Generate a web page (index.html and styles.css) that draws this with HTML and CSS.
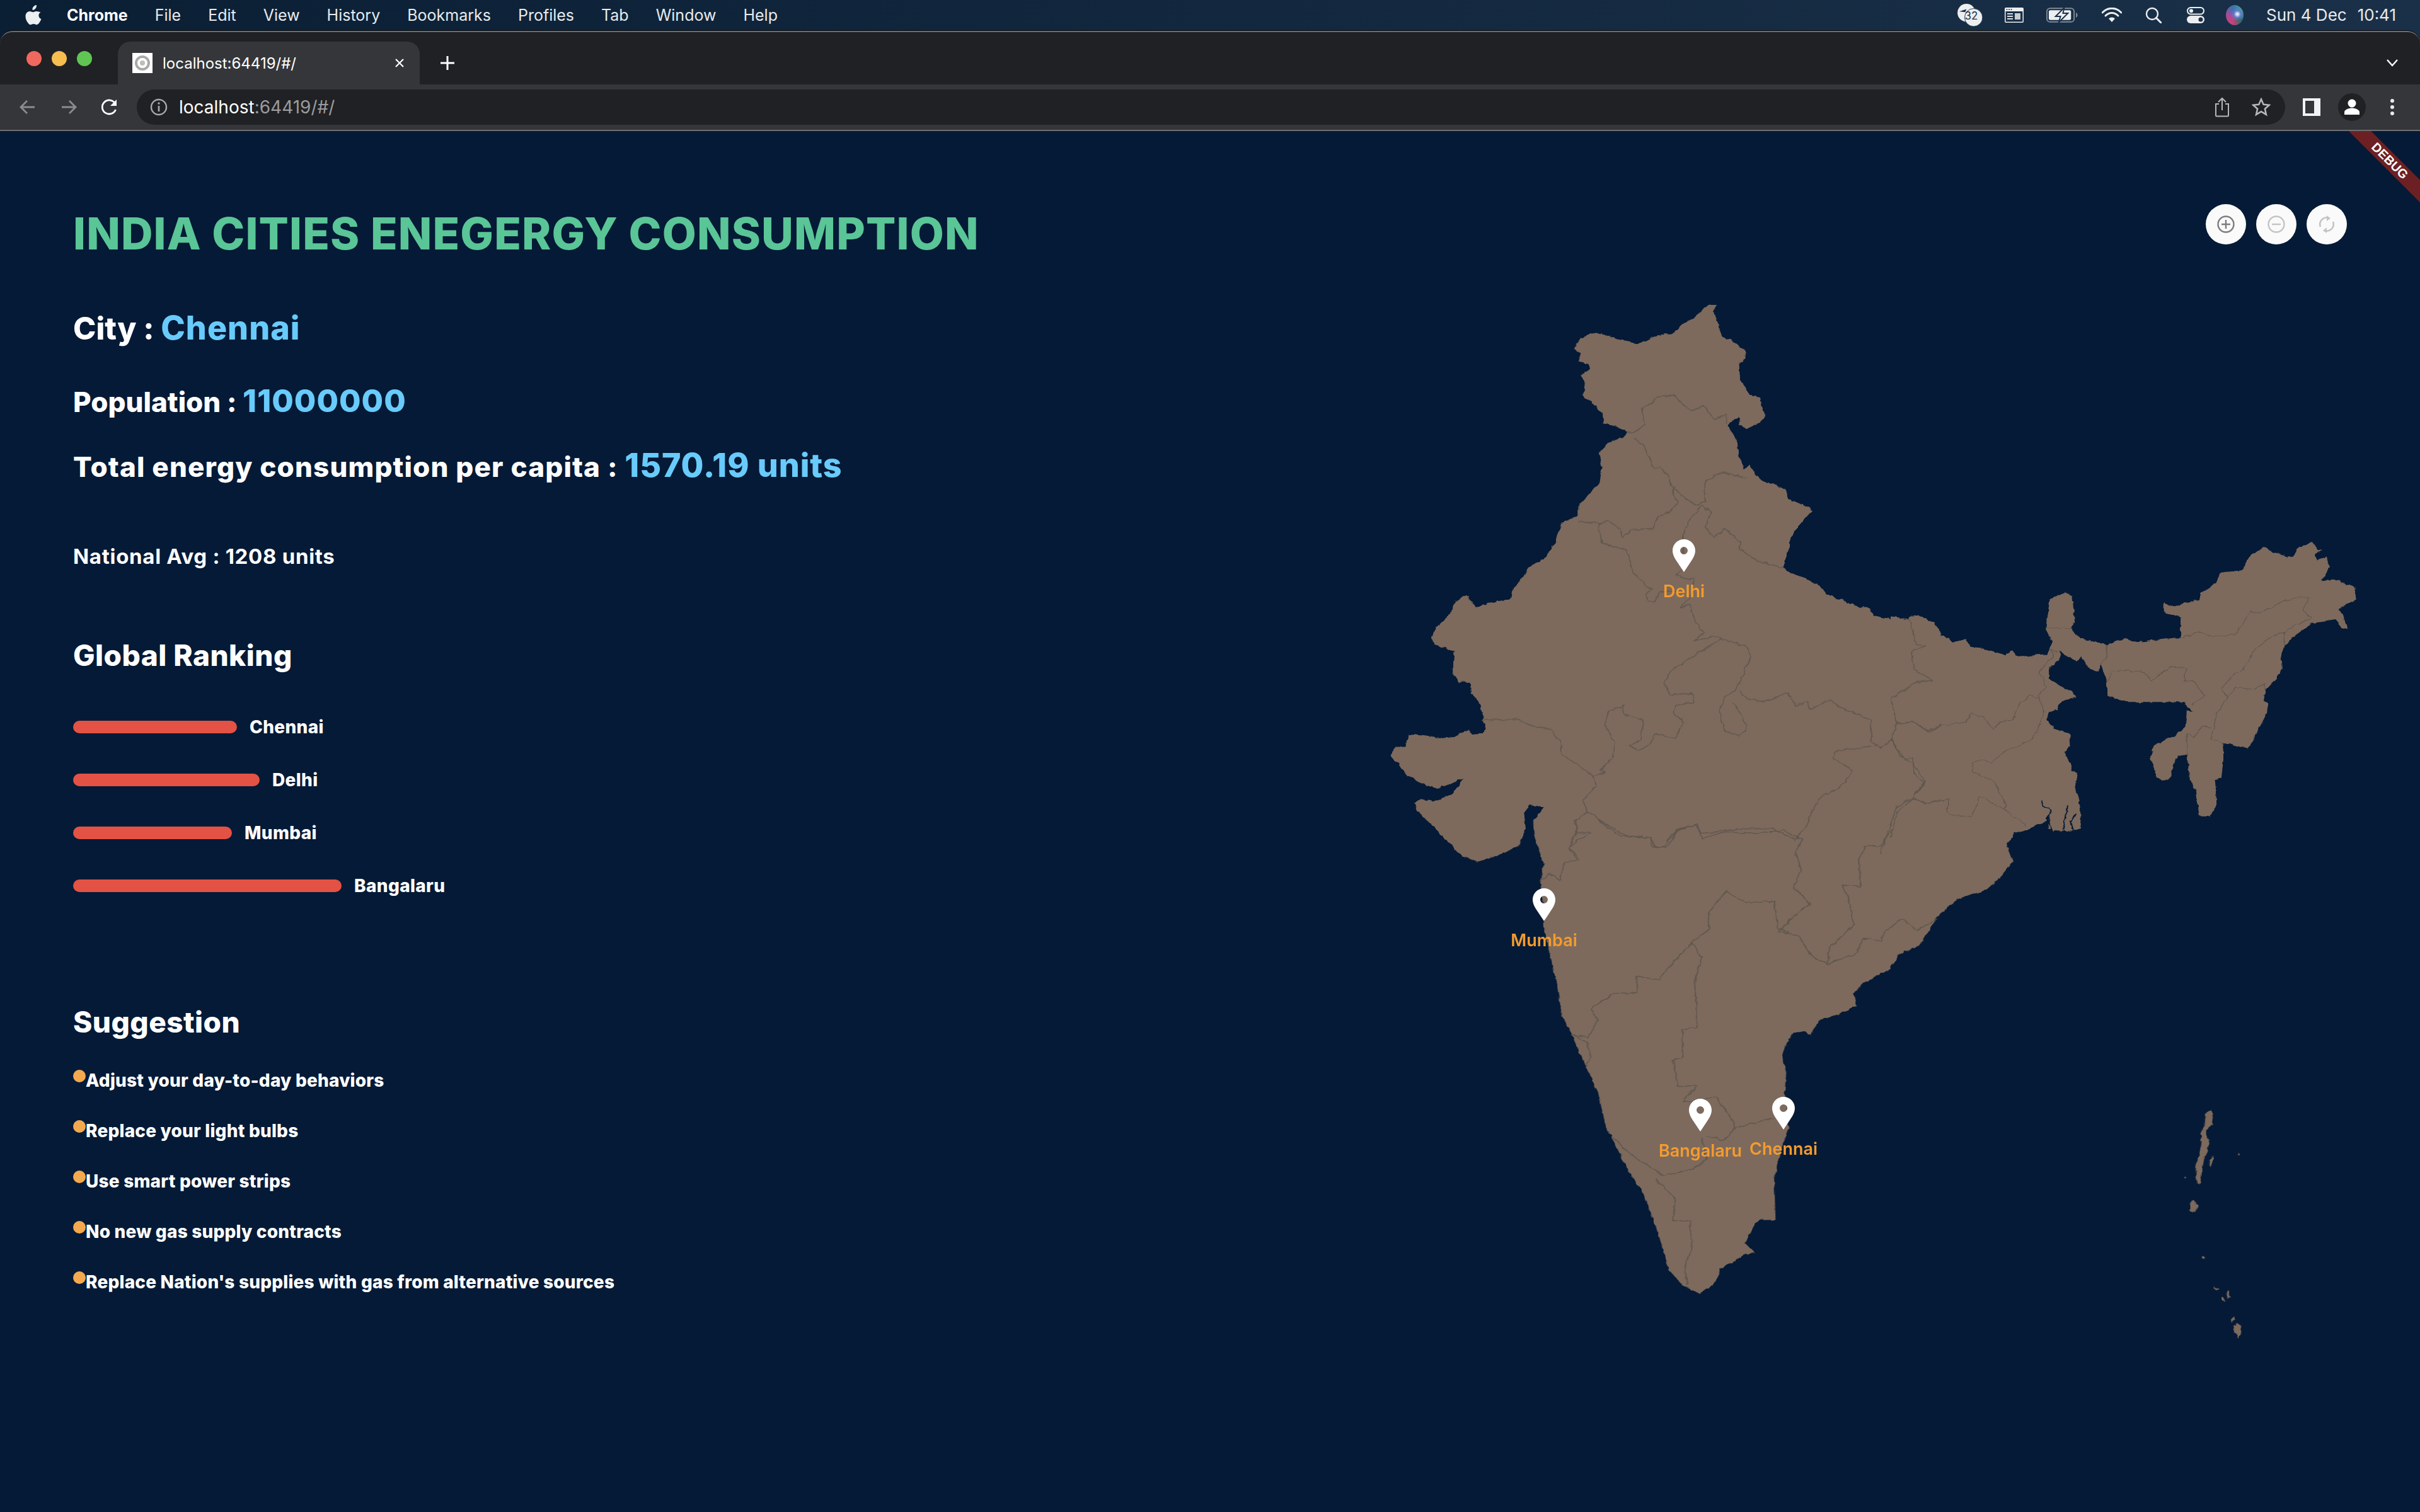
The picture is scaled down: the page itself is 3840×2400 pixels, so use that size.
FILE: index.html
```html
<!DOCTYPE html>
<html lang="en">
<head>
<meta charset="utf-8">
<title>India Cities Energy Consumption</title>
<link rel="stylesheet" href="styles.css">
</head>
<body>
<header class="menubar">
  <svg class="apple" viewBox="0 0 26 32"><path d="M18 0c.3 2.300-.6 4.200-1.700 5.500-1.200 1.400-3 2.500-4.900 2.300-.3-2 .7-4.100 1.700-5.300C14.300 1.100 16.300.100 18 0zM24.700 11.300c-2.100 1.300-3.300 3.100-3.300 5.300 0 2.600 1.500 4.600 4.100 5.700-.6 1.800-1.500 3.500-2.600 5-1.300 1.900-2.700 3.900-4.700 3.900-1.900 0-2.600-1.200-4.900-1.200-2.300 0-3.100 1.200-4.900 1.200-2 0-3.400-2-4.800-4C1.800 24.800.500 21.200.500 18c0-5.200 3.400-8 6.700-8 2 0 3.700 1.300 4.900 1.300 1.200 0 3.100-1.400 5.400-1.400 2.900 0 5.100 1.200 6.200 1.400z"/></svg>
  <nav class="menus">
    <span class="menu-app">Chrome</span><span>File</span><span>Edit</span><span>View</span><span>History</span><span>Bookmarks</span><span>Profiles</span><span>Tab</span><span>Window</span><span>Help</span>
  </nav>
  <div class="status">
    <svg class="st st-sync" viewBox="0 0 42 38"><circle cx="15" cy="15" r="15" fill="#eceef0"/><path d="M3 13l12-4-2 5z" fill="#1a3048"/><circle cx="27" cy="23" r="15" fill="#eceef0" stroke="#1a3048" stroke-width="1"/></svg>
    <span class="sync-count">32</span>
    <svg class="st st-window" viewBox="0 0 30 24"><rect width="30" height="24" rx="2" fill="#eceef0"/><rect x="1.500" y="6" width="27" height="16.500" fill="#1a3048"/><rect x="4" y="9" width="9" height="1.800" fill="#eceef0"/><rect x="4" y="13" width="9" height="1.800" fill="#eceef0"/><rect x="4" y="17" width="9" height="1.800" fill="#eceef0"/><rect x="16" y="9" width="9" height="10" fill="#c9ccd0"/><circle cx="3.500" cy="3" r="1" fill="#1a3048"/><circle cx="7" cy="3" r="1" fill="#1a3048"/><circle cx="10.500" cy="3" r="1" fill="#1a3048"/></svg>
    <svg class="st st-batt" viewBox="0 0 52 24"><rect x="1" y="1" width="44" height="22" rx="5" fill="none" stroke="#7f8a96" stroke-width="2"/><rect x="4" y="4" width="36" height="16" rx="2.500" fill="#eceef0"/><path d="M48 8c2 1 2.500 2 2.500 4s-.5 3-2.500 4z" fill="#7f8a96"/><path d="M29 0L15 14h8l-3 10 15-15h-8z" fill="#eceef0" stroke="#1a3048" stroke-width="2"/></svg>
    <svg class="st st-wifi" viewBox="0 0 32 24"><path d="M1 8c9-9 21-9 30 0" fill="none" stroke="#eceef0" stroke-width="3" stroke-linecap="round"/><path d="M6 13c6-6 14-6 20 0" fill="none" stroke="#eceef0" stroke-width="3" stroke-linecap="round"/><path d="M11 17.500c3-2.700 7-2.700 10 0L16 23z" fill="#eceef0"/></svg>
    <svg class="st st-search" viewBox="0 0 26 26"><circle cx="11" cy="11" r="9" fill="none" stroke="#eceef0" stroke-width="2.400"/><path d="M17.500 17.500L25 25" stroke="#eceef0" stroke-width="3" stroke-linecap="round"/></svg>
    <svg class="st st-ctrl" viewBox="0 0 28 26"><rect x="1" y="1" width="26" height="10.500" rx="5.200" fill="none" stroke="#eceef0" stroke-width="2"/><circle cx="7" cy="6.200" r="3" fill="#eceef0"/><rect x="0" y="14" width="28" height="12" rx="6" fill="#eceef0"/><circle cx="22" cy="20" r="3.500" fill="#1a3048"/></svg>
    <span class="st-siri"></span>
    <span class="clock"><span>Sun 4 Dec</span><span>10:41</span></span>
  </div>
</header>

<div class="window">
  <div class="tabstrip">
    <div class="lights"><i class="light red"></i><i class="light amber"></i><i class="light green"></i></div>
    <div class="tab">
      <span class="favicon"><svg viewBox="0 0 32 32"><circle cx="16" cy="16" r="10" fill="none" stroke="#a9a9a9" stroke-width="4"/><circle cx="16" cy="16" r="4" fill="#bdbdbd"/></svg></span>
      <span class="tab-title">localhost:64419/#/</span>
      <svg class="tab-close" viewBox="0 0 16 16"><path d="M2 2l12 12M14 2L2 14" stroke="#fff" stroke-width="2.200"/></svg>
    </div>
    <svg class="newtab" viewBox="0 0 24 24"><path d="M12 1v22M1 12h22" stroke="#fff" stroke-width="3"/></svg>
    <svg class="tabs-chevron" viewBox="0 0 20 12"><path d="M2 1l8 9 8-9" fill="none" stroke="#fff" stroke-width="2.400"/></svg>
  </div>

  <div class="toolbar">
    <svg class="nav-ic" viewBox="0 0 28 28"><path d="M25 14H4M13 4L3 14l10 10" fill="none" stroke="#8a8c8f" stroke-width="2.800"/></svg>
    <svg class="nav-ic" viewBox="0 0 28 28"><path d="M3 14h21M15 4l10 10-10 10" fill="none" stroke="#8a8c8f" stroke-width="2.800"/></svg>
    <svg class="nav-ic" viewBox="0 0 28 28"><path d="M23.500 18a11 11 0 1 1-1-10" fill="none" stroke="#fff" stroke-width="2.800"/><path d="M25 2v10H15z" fill="#fff"/></svg>
    <div class="omnibox">
      <svg class="info" viewBox="0 0 28 28"><circle cx="14" cy="14" r="12" fill="none" stroke="#a8aaad" stroke-width="2.400"/><path d="M14 12v9" stroke="#a8aaad" stroke-width="2.600"/><circle cx="14" cy="8" r="1.700" fill="#a8aaad"/></svg>
      <span class="url"><b>localhost</b>:64419/#/</span>
      <svg class="omni-ic" viewBox="0 0 24 32"><path d="M7 11H2v18a1.500 1.500 0 0 0 1.500 1.500h17A1.500 1.500 0 0 0 22 29V11h-5" fill="none" stroke="#b6b7b9" stroke-width="2"/><path d="M12 21V3M6 8l6-6 6 6" fill="none" stroke="#b6b7b9" stroke-width="2"/></svg>
      <svg class="omni-ic star" viewBox="0 0 30 30"><path d="M15 2.500l3.700 8.400 9.100.9-6.900 6 2 9-7.900-4.700-7.900 4.700 2-9-6.900-6 9.100-.9z" fill="none" stroke="#b6b7b9" stroke-width="2.600"/></svg>
    </div>
    <svg class="panel" viewBox="0 0 28 28"><rect width="28" height="28" fill="#f1f3f6"/><rect x="4" y="4" width="14" height="20" fill="#35363a"/></svg>
    <span class="avatar"><svg viewBox="0 0 44 44"><circle cx="22" cy="16" r="6.500" fill="#fff"/><path d="M10 34v-4c0-4 7-6.500 12-6.500s12 2.500 12 6.500v4z" fill="#fff"/></svg></span>
    <svg class="kebab" viewBox="0 0 6 26"><circle cx="3" cy="3" r="3" fill="#e8eaed"/><circle cx="3" cy="13" r="3" fill="#e8eaed"/><circle cx="3" cy="23" r="3" fill="#e8eaed"/></svg>
  </div>

  <main class="content">
    <section class="panel-left">
      <h1 class="title">INDIA CITIES ENEGERGY CONSUMPTION</h1>
      <p class="stat stat-city">City : <em>Chennai</em></p>
      <p class="stat stat-pop">Population : <em>11000000</em></p>
      <p class="stat stat-total">Total energy consumption per capita : <em>1570.19 units</em></p>
      <p class="avg">National Avg : 1208 units</p>
      <h2 class="heading heading-rank">Global Ranking</h2>
      <ul class="bars">
        <li class="bar-row"><span class="bar" style="width:260px"></span><span>Chennai</span></li>
        <li class="bar-row"><span class="bar" style="width:296px"></span><span>Delhi</span></li>
        <li class="bar-row"><span class="bar" style="width:252px"></span><span>Mumbai</span></li>
        <li class="bar-row"><span class="bar" style="width:426px"></span><span>Bangalaru</span></li>
      </ul>
      <h2 class="heading heading-sugg">Suggestion</h2>
      <ul class="tips">
        <li>Adjust your day-to-day behaviors</li>
        <li>Replace your light bulbs</li>
        <li>Use smart power strips</li>
        <li>No new gas supply contracts</li>
        <li>Replace Nation's supplies with gas from alternative sources</li>
      </ul>
    </section>

    <section class="map">
      <svg class="map-svg" viewBox="2100 208 1740 2192" preserveAspectRatio="none">
        <defs>
          <filter id="rough" x="2100" y="208" width="1740" height="2192" filterUnits="userSpaceOnUse" primitiveUnits="userSpaceOnUse">
            <feTurbulence type="fractalNoise" baseFrequency="0.11" numOctaves="2" seed="4"/>
            <feDisplacementMap in="SourceGraphic" scale="6" xChannelSelector="R" yChannelSelector="G"/>
          </filter>
        </defs>
        <g filter="url(#rough)">
        <g class="land" transform="translate(2180 460) scale(.574)">
          <path d="M553 163L570 135L607 118L640 125L680 140L735 150L765 133L805 120L825 122L850 97L880 80L925 42L948 42L940 58L950 90L962 130L990 140L1010 155L1030 172L1024 190L1008 205L1010 240L1025 270L1040 292L1068 298L1072 320L1083 350L1065 368L1030 385L1012 372L1010 352L985 365L978 378L992 395L1005 425L1008 460L1018 475L1022 497L1040 485L1055 510L1075 530L1105 535L1140 555L1145 580L1190 595L1215 611L1195 625L1168 660L1150 690L1150 710L1140 735L1130 768L1150 782L1195 798L1235 820L1250 840L1300 860L1345 878L1370 880L1380 900L1430 912L1480 910L1505 900L1540 915L1568 950L1568 1568L465 1568L445 1510L448 1490L462 1488L440 1470L472 1430L430 1425L415 1445L420 1490L400 1515L340 1568L245 1568L180 1500L120 1440L112 1420L130 1408L165 1415L215 1395L250 1350L215 1365L175 1380L130 1365L85 1335L70 1310L45 1290L60 1262L90 1262L95 1230L130 1232L180 1240L215 1238L260 1215L270 1230L300 1228L310 1212L300 1190L305 1185L290 1140L270 1115L268 1085L235 1085L218 1060L222 1000L205 992L165 980L160 960L175 930L210 895L225 860L255 845L270 860L280 880L320 865L380 855L385 825L410 800L425 770L475 740L500 700L518 645L565 625L565 597L590 570L625 530L630 490L622 450L650 422L695 405L700 392L660 375L635 370L632 340L600 310L578 295L585 260L572 235L598 220L595 205L565 200L572 175Z"/>
        </g>
        <g class="land" transform="translate(3000 800) scale(.4974 .357)">
          <path d="M0 500L30 505L55 520L60 505L85 495L105 515L140 525L142 570L185 600L200 615L240 600L255 635L290 640L340 660L365 672L390 650L400 670L425 680L465 670L500 668L510 630L516 610L497 560L500 510L508 420L555 395L580 410L585 500L588 525L575 545L590 585L625 605L690 625L745 598L780 615L850 605L905 595L925 595L925 500L870 480L870 437L905 455L945 437L985 425L990 395L1040 350L1050 305L1120 295L1150 225L1195 188L1215 215L1280 238L1295 200L1345 168L1365 205L1378 200L1355 225L1358 250L1390 235L1402 280L1375 340L1410 335L1480 370L1485 425L1432 465L1460 555L1440 550L1420 515L1345 530L1290 585L1255 630L1245 680L1248 730L1235 770L1195 830L1190 875L1205 885L1200 930L1160 1040L1140 1088L1060 1060L1062 1130L1055 1220L1035 1225L1040 1340L1020 1390L985 1388L975 1280L955 1230L945 1115L915 1120L890 1220L870 1232L850 1215L828 1125L840 1075L880 1045L905 1030L940 990L945 920L965 925L935 880L870 880L750 880L690 850L690 790L670 710L660 745L630 730L610 680L590 700L570 680L535 650L545 675L505 730L505 775L535 805L575 830L595 860L545 875L530 915L505 925L497 960L525 1000L570 1020L572 1080L555 1100L570 1150L578 1190L597 1195L590 1260L605 1350L607 1440L570 1455L520 1450L500 1440L510 1390L500 1370L480 1320L505 1380L490 1410L435 1450L395 1465L370 1510L383 1568L0 1568Z"/>
        </g>
        <g class="land" transform="translate(2180 1300) scale(.7653 .5102)">
          <path d="M105 0L135 30L190 120L215 133L250 118L300 85L312 40L305 0Z"/>
          <path d="M330 0L332 50L352 140L345 195L355 310L350 330L365 420L380 520L390 610L410 670L430 740L465 850L480 950L495 1000L530 1100L560 1170L590 1290L610 1400L640 1450L675 1478L710 1440L718 1400L770 1355L790 1350L770 1320L790 1260L800 1248L833 1247L830 1120L850 1000L860 960L852 850L855 790L847 740L855 700L870 665L895 660L905 672L925 625L960 610L1000 580L995 545L1010 515L1070 465L1090 420L1130 395L1170 300L1210 250L1270 220L1300 180L1325 130L1310 80L1330 40L1390 10L1400 0Z"/>
        </g>
        <g class="land" transform="translate(3440 1720) scale(.3333)">
          <path d="M205 125L215 150L208 195L180 225L195 270L190 320L175 350L165 400L158 450L150 480L138 475L130 395L150 340L157 280L155 235L175 200L180 140Z"/>
          <path d="M215 340L215 370L205 395L195 365Z"/>
          <path d="M122 555L140 585L128 612L108 605L106 575Z"/>
          <path d="M168 820L178 830L170 838L160 832Z"/>
          <path d="M220 962L240 982L228 985L218 975Z"/>
          <path d="M285 982L297 1020L285 1022L277 995Z"/>
          <path d="M262 1015L278 1035L258 1033L253 1022Z"/>
          <path d="M315 1108L322 1125L305 1135L303 1120Z"/>
          <path d="M330 1140L345 1150L352 1185L335 1212L315 1175L308 1150Z"/>
          <path d="M84 442L90 452L80 454Z"/>
          <path d="M337 325L343 338L333 338Z"/>
        </g>
        <g class="borders" transform="translate(2180 460) scale(.574)">
          <path d="M700 390L720 395L750 372L740 330L785 297L830 290L850 315L880 335L910 320L940 358L975 345L975 370"/>
          <path d="M720 410L750 435L775 495L790 488L815 515L820 540L860 575L890 595L915 585L915 530L960 505L1030 520"/>
          <path d="M565 640L620 645L650 640L680 660L688 685L710 665L770 660L785 628L815 615L840 590L825 555L835 545"/>
          <path d="M620 645L630 700L665 710L700 720L715 780L760 825L770 830L752 840L755 860L775 865L790 835L835 835"/>
          <path d="M905 597L932 615L915 655L940 685L970 660L1015 700L1010 715L1060 750L1120 765L1130 770"/>
          <path d="M905 597L870 640L855 680L857 770L835 790L865 800L885 800L880 845L845 880L875 870L880 900L910 950L887 970L945 958L960 965L1030 985L1042 1015L1010 1090L990 1115L970 1125L955 1165L970 1220L1010 1235L1030 1215L1015 1170L990 1140"/>
          <path d="M960 965L880 1015L820 1055L802 1085L820 1120L880 1115L885 1140L835 1150L830 1170L855 1195L835 1240L775 1228L765 1255L730 1275L708 1260L738 1245L745 1190L690 1175L690 1150L650 1165L640 1205L665 1250L660 1295L625 1330L640 1335L605 1345"/>
          <path d="M300 1190L395 1188L430 1205L490 1215L515 1250L520 1285L580 1325L605 1345L615 1370L580 1410L590 1445L555 1470L560 1500L600 1500L540 1540L565 1568"/>
          <path d="M1010 1110L1030 1130L1080 1140L1145 1115L1165 1150L1200 1140L1205 1160L1260 1135L1300 1160L1375 1190L1375 1250L1400 1268L1432 1245"/>
          <path d="M1375 1262L1280 1275L1270 1295L1325 1330L1290 1375L1230 1405L1190 1490L1165 1520L1100 1490L1040 1490L975 1495L905 1505L890 1480L835 1495L800 1540L770 1540L765 1515L680 1510L625 1470L610 1455L590 1445"/>
          <path d="M1480 910L1500 980L1525 985L1485 1000L1495 1050L1545 1080L1500 1085L1430 1130L1445 1200L1432 1245L1455 1290L1490 1310L1525 1360L1490 1405L1445 1430L1400 1560"/>
          <path d="M1445 1200L1495 1195L1530 1220L1568 1205"/>
          <path d="M1490 1405L1530 1420L1568 1410"/>
        </g>
        <g class="borders" transform="translate(3000 800) scale(.4974 .357)">
          <path d="M10 985L70 965L120 1015L160 985L240 970L255 935L295 945L330 1005L345 970L390 960L415 880L450 850L470 865"/>
          <path d="M530 660L510 645L520 680L473 745L498 815L470 850L490 920L470 1000L450 1050L370 1095L320 1150L285 1135L265 1150L262 1190L330 1235L370 1340L360 1355L435 1430"/>
          <path d="M0 1045L45 1135L70 1130L75 1200L110 1240L70 1310L110 1330L185 1315L180 1370L205 1385L260 1390L285 1300L360 1355"/>
          <path d="M70 1310L20 1370L0 1480"/>
          <path d="M500 550L545 550L580 550"/>
          <path d="M925 595L985 570L1030 590L1100 580L1150 475L1175 485L1260 430L1305 415L1337 415L1315 470L1340 510L1290 540L1255 570L1215 590L1160 650L1125 740L1100 750L1055 820L1075 860L1100 815L1160 825L1190 795L1195 830"/>
          <path d="M690 625L690 680L670 710"/>
          <path d="M690 790L705 745L750 740L810 750L835 785L890 725L945 730L935 790L965 785L1000 855L960 895"/>
          <path d="M1255 570L1255 630"/>
          <path d="M1075 860L1040 930L1022 1050L1060 1060"/>
          <path d="M1022 1000L995 985L965 1040L945 1020L945 1115"/>
        </g>
        <g class="borders" transform="translate(2180 1300) scale(.7653 .5102)">
          <path d="M465 0L520 50L575 60L585 90L610 85L625 40L670 15L680 60L730 40L780 45L850 35L888 65L875 100L885 160L870 210L905 265L865 310L840 350L880 365L910 430L940 450L1000 420L1015 370L1050 380L1060 350L1095 310L1125 345L1170 310"/>
          <path d="M860 355L838 340L830 255L770 260L730 225L695 290L695 340L660 385L630 430L590 500L545 490L545 540L495 545L450 590L465 625L445 680L410 670"/>
          <path d="M660 385L680 430L665 510L670 600L670 650L640 655L640 740L620 750L630 830L670 830L640 880L710 865L740 930L750 960L830 930"/>
          <path d="M750 960L725 1000L690 985"/>
          <path d="M495 990L530 1040L570 1080L600 1110L660 1090L690 1060L680 990"/>
          <path d="M585 1120L625 1180L620 1250L655 1250L660 1330L645 1395L650 1450"/>
          <path d="M410 670L440 690L450 740L440 770"/>
          <path d="M1075 30L1050 85L1020 85L1005 125L1010 210L970 205L985 250L995 330L945 400L940 450"/>
          <path d="M420 0L420 40L405 90L425 130L395 135L385 190L365 170L345 195"/>
        </g>
        <g class="creeks" transform="translate(3000 800) scale(.4974 .357)">
          <path d="M482 1318L488 1345L512 1365L500 1405L515 1450"/>
          <path d="M565 1340L558 1400L550 1450"/>
          <path d="M590 1380L575 1410L582 1450"/>
        </g>
        </g>
      </svg>

      <div class="pin pin-delhi"><svg viewBox="0 0 36 52"><path fill-rule="evenodd" d="M18 0C8 0 0 8 0 18c0 7 4 13 8 19l10 15 10-15c4-6 8-12 8-19C36 8 28 0 18 0zM18 12a6 6 0 1 1 0 12 6 6 0 0 1 0-12z"/></svg><span>Delhi</span></div>
      <div class="pin pin-mumbai"><svg viewBox="0 0 36 52"><path fill-rule="evenodd" d="M18 0C8 0 0 8 0 18c0 7 4 13 8 19l10 15 10-15c4-6 8-12 8-19C36 8 28 0 18 0zM18 12a6 6 0 1 1 0 12 6 6 0 0 1 0-12z"/></svg><span>Mumbai</span></div>
      <div class="pin pin-bangalaru"><svg viewBox="0 0 36 52"><path fill-rule="evenodd" d="M18 0C8 0 0 8 0 18c0 7 4 13 8 19l10 15 10-15c4-6 8-12 8-19C36 8 28 0 18 0zM18 12a6 6 0 1 1 0 12 6 6 0 0 1 0-12z"/></svg><span>Bangalaru</span></div>
      <div class="pin pin-chennai"><svg viewBox="0 0 36 52"><path fill-rule="evenodd" d="M18 0C8 0 0 8 0 18c0 7 4 13 8 19l10 15 10-15c4-6 8-12 8-19C36 8 28 0 18 0zM18 12a6 6 0 1 1 0 12 6 6 0 0 1 0-12z"/></svg><span>Chennai</span></div>

      <div class="map-controls">
        <button class="round-btn"><svg viewBox="0 0 28 28"><circle cx="14" cy="14" r="12.500" fill="none" stroke="#7d7d7d" stroke-width="2.400"/><path d="M14 7v14M7 14h14" stroke="#7d7d7d" stroke-width="2.400"/></svg></button>
        <button class="round-btn"><svg viewBox="0 0 28 28"><circle cx="14" cy="14" r="12.500" fill="none" stroke="#c4c4c4" stroke-width="2.400"/><path d="M7 14h14" stroke="#c4c4c4" stroke-width="2.400"/></svg></button>
        <button class="round-btn"><svg viewBox="0 0 28 28"><path d="M4 18a11 11 0 0 1 3-12c3-2.500 6-3 8-2.500" fill="none" stroke="#c4c4c4" stroke-width="2.600"/><path d="M24 10a11 11 0 0 1-3 12c-3 2.500-6 3-8 2.500" fill="none" stroke="#c4c4c4" stroke-width="2.600"/><path d="M14 0l6 4.500-6 4.500z" fill="#c4c4c4"/><path d="M14 19l-6 5 6 4z" fill="#c4c4c4"/></svg></button>
      </div>
    </section>

    <div class="debug"><span>DEBUG</span></div>
  </main>
</div>
</body>
</html>
```
FILE: styles.css
```css
* { box-sizing: border-box; }
html, body { margin: 0; padding: 0; }
body {
  width: 3840px;
  height: 2400px;
  overflow: hidden;
  display: flex;
  flex-direction: column;
  background: linear-gradient(90deg, #0a1f34, #1a3048);
  font-family: "Inter", "Liberation Sans", sans-serif;
  color: #fff;
}

/* macOS menu bar */
.menubar {
  height: 49px;
  flex: none;
  display: flex;
  align-items: center;
  padding: 0 38px 2px 40px;
  position: relative;
  font-size: 25px;
  color: #e8eaed;
}
.apple { width: 26px; height: 32px; fill: #eceef0; flex: none; }
.menus { display: flex; gap: 43px; margin-left: 40px; }
.menu-app { font-weight: 700; color: #fff; }
.status { margin-left: auto; display: flex; align-items: center; position: relative; }
.st { flex: none; display: block; }
.st-sync { width: 40px; height: 36px; margin-right: 35px; }
.sync-count {
  position: absolute;
  left: 8px; top: 9px;
  width: 28px;
  text-align: center;
  font-size: 17px;
  color: #1a3048;
}
.st-window { width: 30px; height: 24px; margin-right: 36px; }
.st-batt { width: 51px; height: 24px; margin-right: 37px; }
.st-wifi { width: 32px; height: 24px; margin-right: 37px; }
.st-search { width: 26px; height: 26px; margin-right: 40px; }
.st-ctrl { width: 28px; height: 26px; margin-right: 34px; }
.st-siri {
  width: 28px; height: 32px; border-radius: 50%; margin-right: 36px;
  background: radial-gradient(circle at 65% 45%, #e6eef8 4%, #5f78c8 22%, transparent 42%), conic-gradient(from 200deg, #c8427a, #a54b9a, #3d6fb0, #3fa88f, #2d6a6a, #c8427a);
}
.clock { display: flex; gap: 17px; font-size: 26px; }

/* Browser window */
.window {
  flex: 1;
  display: flex;
  flex-direction: column;
  min-height: 0;
  border-radius: 20px 20px 0 0;
  overflow: hidden;
  background: #202124;
  border-top: 2px solid #6d6e71;
  box-shadow: 0 -1px 0 #05080c;
}
.tabstrip {
  height: 83px;
  flex: none;
  display: flex;
  align-items: flex-end;
  padding-left: 42px;
  padding-right: 34px;
  position: relative;
}
.lights { display: flex; gap: 16px; align-self: flex-start; margin-top: 30px; width: 145px; flex: none; }
.light { width: 24px; height: 24px; border-radius: 50%; display: block; }
.red { background: #f1685e; }
.amber { background: #f6bd4f; }
.green { background: #61c554; }
.tab {
  width: 479px;
  height: 68px;
  background: #35363a;
  border-radius: 20px 20px 0 0;
  display: flex;
  align-items: center;
  padding: 0 24px 0 23px;
  flex: none;
}
.favicon { width: 32px; height: 32px; background: #fff; flex: none; margin-right: 16px; display: block; }
.favicon svg { display: block; }
.tab-title { font-size: 24px; color: #fff; font-family: "Inter", sans-serif; }
.tab-close { width: 16px; height: 16px; margin-left: auto; }
.newtab { width: 24px; height: 24px; margin: 0 0 22px 32px; flex: none; }
.tabs-chevron { width: 20px; height: 12px; margin: 0 0 28px auto; flex: none; }

.toolbar {
  height: 72px;
  flex: none;
  background: #35363a;
  display: flex;
  align-items: center;
  padding: 0 24px 0 30px;
  border-bottom: 0;
}
.nav-ic { width: 28px; height: 28px; margin-right: 37px; flex: none; }
.nav-ic:nth-child(3) { margin-right: 29px; }
.omnibox {
  width: 3409px;
  height: 56px;
  flex: none;
  background: #202124;
  border-radius: 28px;
  display: flex;
  align-items: center;
  padding: 0 23px 0 21px;
}
.info { width: 28px; height: 28px; flex: none; margin-right: 18px; }
.url { font-size: 28px; color: #9a9c9f; }
.url b { font-weight: 400; color: #fff; }
.omni-ic { width: 24px; height: 32px; margin-left: auto; flex: none; }
.star { width: 30px; height: 30px; margin-left: 35px; }
.panel { width: 28px; height: 28px; margin-left: 28px; flex: none; }
.avatar { width: 44px; height: 44px; border-radius: 50%; background: #202124; margin-left: 28px; flex: none; display: block; }
.avatar svg { display: block; }
.kebab { width: 6px; height: 26px; margin-left: 39px; flex: none; }

/* Page */
.content {
  flex: 1;
  min-height: 0;
  display: flex;
  background: #051a36;
  border-top: 2px solid #6d6f73;
  position: relative;
  overflow: hidden;
}
.panel-left {
  width: 2100px;
  flex: none;
  padding: 121px 0 0 116px;
}
.title {
  margin: 0;
  font-size: 70px;
  line-height: 84px;
  font-weight: 800;
  color: #5ac596;
  letter-spacing: 1.15px;
}
.stat { margin: 0; font-weight: 800; color: #fff; white-space: nowrap; }
.stat em { font-style: normal; color: #68cbfb; }
.stat-city { font-size: 49px; line-height: 60px; margin-top: 78px; }
.stat-city em { font-size: 52px; letter-spacing: 1px; }
.stat-pop { font-size: 44px; line-height: 60px; margin-top: 54px; }
.stat-pop em { font-size: 50px; letter-spacing: 1px; }
.stat-total { font-size: 44px; line-height: 60px; margin-top: 41px; letter-spacing: 1.13px; }
.stat-total em { font-size: 52px; letter-spacing: .9px; }
.avg { margin: 92px 0 0; font-size: 33px; line-height: 40px; font-weight: 700; letter-spacing: .7px; color: #fff; }
.heading { margin: 0; font-size: 46px; line-height: 56px; font-weight: 800; letter-spacing: .45px; color: #fff; }
.heading-rank { margin-top: 109px; }
.heading-sugg { margin-top: 168px; }
.bars { list-style: none; margin: 66px 0 0; padding: 0; display: flex; flex-direction: column; gap: 44px; }
.bar-row { display: flex; align-items: center; gap: 20px; height: 40px; font-size: 28px; font-weight: 800; letter-spacing: .35px; }
.bar { height: 20px; border-radius: 10px; background: #e35244; display: block; flex: none; }
.tips { list-style: none; margin: 45px 0 0; padding: 0; display: flex; flex-direction: column; gap: 40px; }
.tips li {
  font-size: 28px;
  line-height: 40px;
  font-weight: 800;
  letter-spacing: .2px;
  padding-left: 20px;
  position: relative;
}
.tips li::before {
  content: "";
  position: absolute;
  left: 0; top: 3px;
  width: 20px; height: 20px;
  border-radius: 50%;
  background: #f4a94f;
}

/* Map */
.map { flex: 1; position: relative; min-width: 0; }
.map-svg { position: absolute; left: 0; top: 0; width: 1740px; height: 2192px; display: block; }
.land { fill: #7d6b5d; }
.borders { fill: none; stroke: #5f554e; stroke-width: 2.600; stroke-linejoin: round; }
.creeks { fill: none; stroke: #051a36; stroke-width: 4; }
.pin {
  position: absolute;
  width: 200px;
  display: flex;
  flex-direction: column;
  align-items: center;
  gap: 16px;
  font-size: 27px;
  line-height: 30px;
  font-weight: 600;
  color: #f49b2e;
}
.pin svg { width: 36px; height: 52px; fill: #fff; display: block; }
.pin-delhi { left: 472px; top: 648px; }
.pin-mumbai { left: 250px; top: 1202px; }
.pin-bangalaru { left: 498px; top: 1536px; }
.pin-chennai { left: 630px; top: 1533px; }
.map-controls { position: absolute; top: 116px; right: 116px; display: flex; gap: 16px; }
.round-btn {
  width: 64px; height: 64px;
  border-radius: 50%;
  border: 0;
  padding: 18px;
  background: #fafafa;
  display: block;
}
.round-btn svg { display: block; width: 28px; height: 28px; }

/* Debug banner */
.debug {
  position: absolute;
  top: 0; right: 0;
  width: 140px; height: 140px;
  overflow: hidden;
}
.debug span {
  position: absolute;
  left: -8px; top: 34.500px;
  width: 200px;
  height: 25px;
  background: #6d2023;
  color: #fff;
  font: 700 20px/25px "Liberation Sans", sans-serif;
  text-align: center;
  transform: rotate(45deg);
}
```
